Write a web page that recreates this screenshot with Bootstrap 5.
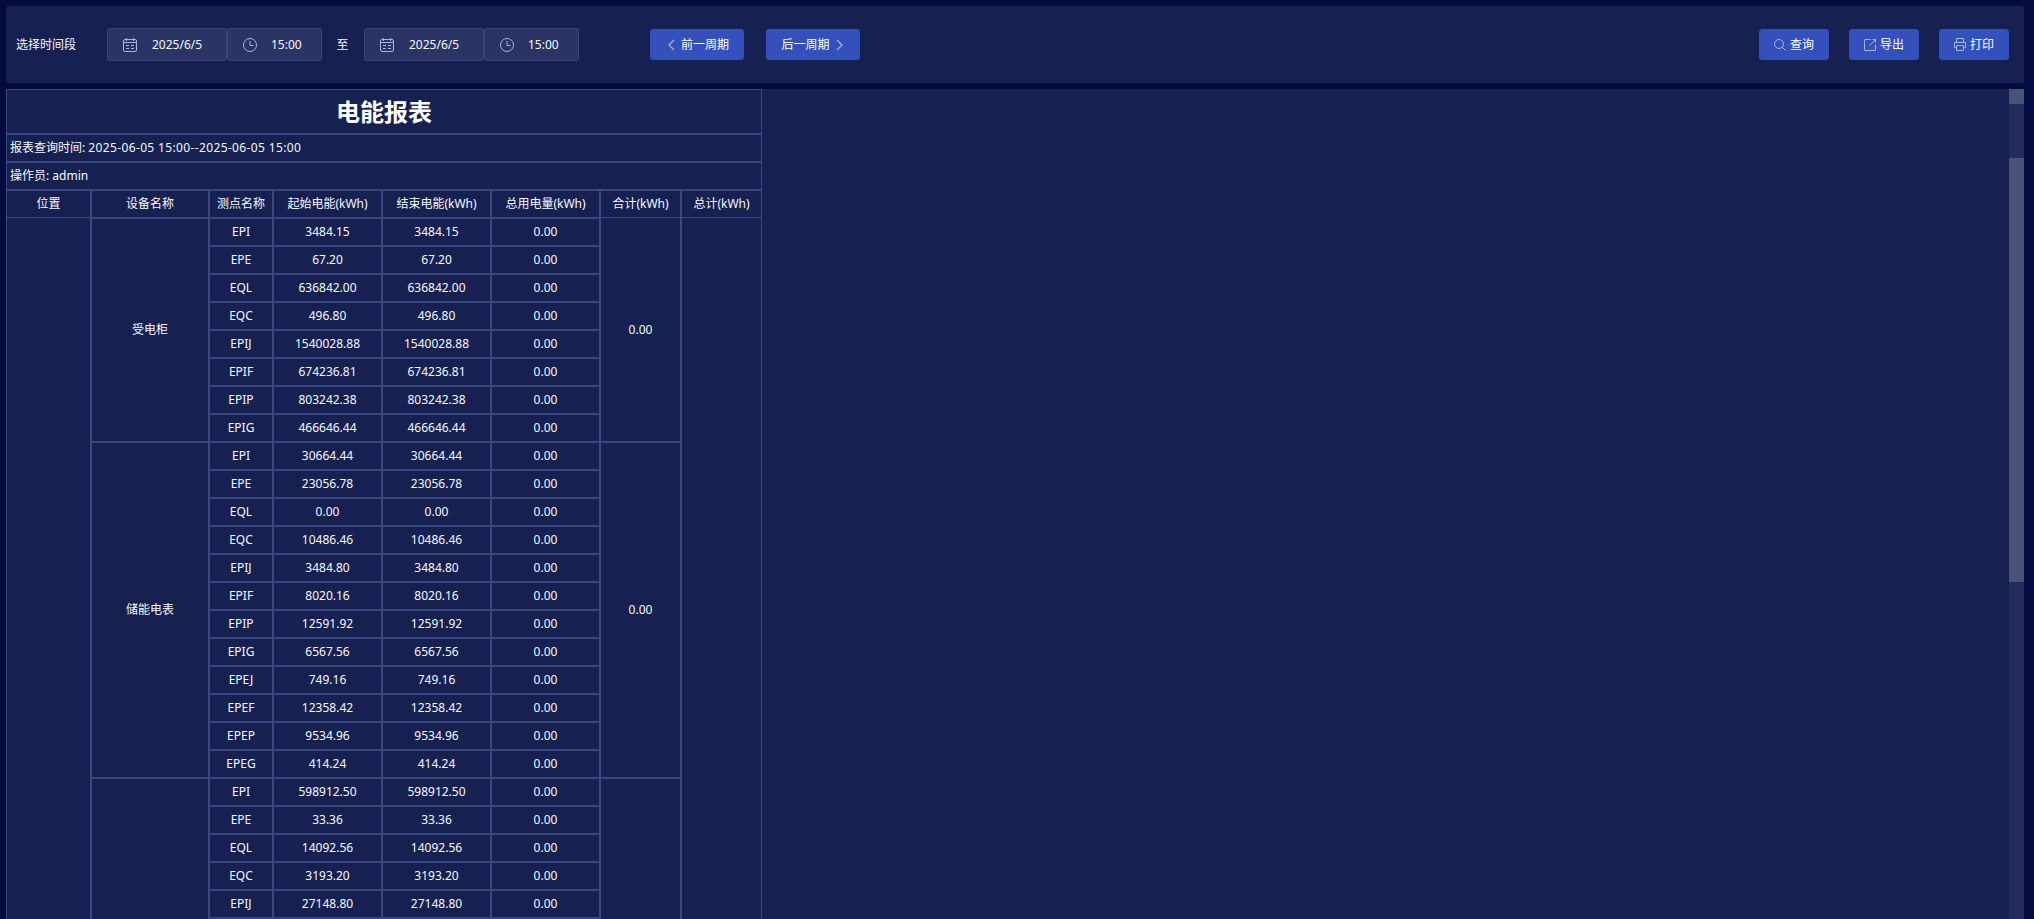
<!DOCTYPE html>
<html lang="zh-CN">
<head>
<meta charset="utf-8">
<title>电能报表</title>
<link href="https://cdn.jsdelivr.net/npm/bootstrap@5.3.0/dist/css/bootstrap.min.css" rel="stylesheet">
<style>
html,body{height:100%;overflow:hidden;}
body{background:#040b3f;color:#fff;font-family:"Noto Sans","Noto Sans CJK SC",sans-serif;font-size:12px;padding:6px 10px 0 6px;}
.shell{height:100%;gap:6px;}
.topbar{height:77px;background:#162152;border-radius:2px;padding:0 15px 0 10px;flex:none;}
.range-label{width:91px;color:#f6f8fd;}
.picker{height:33px;background:#2a3566;border:1px solid #3a4580;border-radius:3px;color:#f6f8fd;}
.picker-date{width:120px;padding-left:15px;gap:15px;}
.picker-time{width:95px;padding-left:15px;gap:14px;}
.range-to{width:42px;padding-right:1px;text-align:center;color:#f6f8fd;}
.picker svg,.act-btn svg{flex:none;stroke:#a9b4e2;fill:none;stroke-width:1;}
.act-btn{--bs-btn-bg:#3450bd;--bs-btn-border-color:#3450bd;--bs-btn-hover-bg:#3450bd;--bs-btn-hover-border-color:#3450bd;--bs-btn-color:#fff;--bs-btn-hover-color:#fff;--bs-btn-font-size:12px;--bs-btn-padding-x:0;--bs-btn-padding-y:0;--bs-btn-border-radius:3px;height:31px;font-family:inherit;gap:4px;}
.act-week{width:94px;gap:6px;}
.act-week.first{margin-left:71px;padding-left:3px;}
.act-week.second{margin-left:22px;padding-right:2px;}
.act-tool{width:70px;margin-left:20px;}
.act-tool.first{margin-left:auto;}
.main-panel{background:#162152;min-height:0;flex:1 1 0;}
.report-area{overflow:hidden;min-width:0;}
.rpt-table{width:756px;table-layout:fixed;border-collapse:separate;border-spacing:0;--bs-table-bg:transparent;--bs-table-color:#f6f8fd;}
.rpt-table>tbody>tr>td{padding:0;height:28px;border:1px solid #3b4782;text-align:center;vertical-align:middle;font-size:12px;line-height:16px;color:#f6f8fd;background:transparent;}
.rpt-table>tbody>tr>td.title-cell{height:45px;font-size:24px;font-weight:700;line-height:30px;color:#fff;}
.rpt-table>tbody>tr>td.info-cell{text-align:left;padding-left:3px;}
.rpt-table>tbody>tr>td.no-top{border-top-width:0;}
.stamp-text{letter-spacing:.36px;}
.fake-scroll{width:15px;flex:none;background:#222c5d;}
.scroll-cap{height:15px;background:#4a5278;}
.scroll-thumb{height:424px;margin-top:54px;background:#4a5278;}
</style>
</head>
<body>
<div class="shell d-flex flex-column">
  <div class="topbar d-flex align-items-center">
    <span class="range-label">选择时间段</span>
    <div class="picker picker-date d-flex align-items-center">
      <svg width="14" height="14" viewBox="0 0 14 14"><rect x="0.5" y="1.5" width="13" height="12" rx="1.5"/><path d="M0.5 4.5h13M3.5 0v3M10.5 0v3M3 7.500h3M8 7.500h3M3 10.500h3M8 10.500h3"/></svg>
      <span>2025/6/5</span>
    </div>
    <div class="picker picker-time d-flex align-items-center">
      <svg width="14" height="14" viewBox="0 0 14 14"><circle cx="7" cy="7" r="6.5"/><path d="M7 3v4.500h3.500"/></svg>
      <span>15:00</span>
    </div>
    <span class="range-to">至</span>
    <div class="picker picker-date d-flex align-items-center">
      <svg width="14" height="14" viewBox="0 0 14 14"><rect x="0.5" y="1.5" width="13" height="12" rx="1.5"/><path d="M0.5 4.5h13M3.5 0v3M10.5 0v3M3 7.500h3M8 7.500h3M3 10.500h3M8 10.500h3"/></svg>
      <span>2025/6/5</span>
    </div>
    <div class="picker picker-time d-flex align-items-center">
      <svg width="14" height="14" viewBox="0 0 14 14"><circle cx="7" cy="7" r="6.5"/><path d="M7 3v4.500h3.500"/></svg>
      <span>15:00</span>
    </div>
    <button type="button" class="btn act-btn act-week first d-inline-flex align-items-center justify-content-center">
      <svg width="7" height="12" viewBox="0 0 7 12"><path d="M6 1 1 6l5 5" stroke-width="1.2"/></svg><span>前一周期</span>
    </button>
    <button type="button" class="btn act-btn act-week second d-inline-flex align-items-center justify-content-center">
      <span>后一周期</span><svg width="7" height="12" viewBox="0 0 7 12"><path d="M1 1l5 5-5 5" stroke-width="1.2"/></svg>
    </button>
    <button type="button" class="btn act-btn act-tool first d-inline-flex align-items-center justify-content-center">
      <svg width="12" height="12" viewBox="0 0 12 12"><circle cx="5" cy="5" r="4.500"/><path d="M8.300 8.300 11.700 11.700"/></svg><span>查询</span>
    </button>
    <button type="button" class="btn act-btn act-tool d-inline-flex align-items-center justify-content-center">
      <svg width="12" height="12" viewBox="0 0 12 12"><path d="M6.500.5H1a.5.5 0 0 0-.5.5v10a.5.5 0 0 0 .5.5h10a.5.5 0 0 0 .5-.5V5.500M5.500 6.500l6-6M8.500.5h3v3"/></svg><span>导出</span>
    </button>
    <button type="button" class="btn act-btn act-tool d-inline-flex align-items-center justify-content-center">
      <svg width="12" height="13" viewBox="0 0 12 13"><path d="M2.500 4V.5h7V4M2.500 9.500H.5v-5h11v5h-2M2.500 7.500h7v5h-7z"/></svg><span>打印</span>
    </button>
  </div>
  <div class="main-panel d-flex">
    <div class="report-area flex-grow-1">
      <table class="table mb-0 rpt-table">
        <colgroup><col style="width:85px"><col style="width:118px"><col style="width:64px"><col style="width:109px"><col style="width:109px"><col style="width:109px"><col style="width:81px"><col style="width:81px"></colgroup>
        <tbody>
          <tr><td colspan="8" class="title-cell">电能报表</td></tr>
          <tr><td colspan="8" class="info-cell">报表查询时间: <span class="stamp-text">2025-06-05 15:00--2025-06-05 15:00</span></td></tr>
          <tr><td colspan="8" class="info-cell">操作员: admin</td></tr>
          <tr><td>位置</td><td>设备名称</td><td>测点名称</td><td>起始电能(kWh)</td><td>结束电能(kWh)</td><td>总用电量(kWh)</td><td>合计(kWh)</td><td>总计(kWh)</td></tr>
          <tr><td rowspan="26" class="no-top"></td><td rowspan="8">受电柜</td><td>EPI</td><td>3484.15</td><td>3484.15</td><td>0.00</td><td rowspan="8" class="no-top">0.00</td><td rowspan="26" class="no-top"></td></tr>
          <tr><td>EPE</td><td>67.20</td><td>67.20</td><td>0.00</td></tr>
          <tr><td>EQL</td><td>636842.00</td><td>636842.00</td><td>0.00</td></tr>
          <tr><td>EQC</td><td>496.80</td><td>496.80</td><td>0.00</td></tr>
          <tr><td>EPIJ</td><td>1540028.88</td><td>1540028.88</td><td>0.00</td></tr>
          <tr><td>EPIF</td><td>674236.81</td><td>674236.81</td><td>0.00</td></tr>
          <tr><td>EPIP</td><td>803242.38</td><td>803242.38</td><td>0.00</td></tr>
          <tr><td>EPIG</td><td>466646.44</td><td>466646.44</td><td>0.00</td></tr>
          <tr><td rowspan="12">储能电表</td><td>EPI</td><td>30664.44</td><td>30664.44</td><td>0.00</td><td rowspan="12">0.00</td></tr>
          <tr><td>EPE</td><td>23056.78</td><td>23056.78</td><td>0.00</td></tr>
          <tr><td>EQL</td><td>0.00</td><td>0.00</td><td>0.00</td></tr>
          <tr><td>EQC</td><td>10486.46</td><td>10486.46</td><td>0.00</td></tr>
          <tr><td>EPIJ</td><td>3484.80</td><td>3484.80</td><td>0.00</td></tr>
          <tr><td>EPIF</td><td>8020.16</td><td>8020.16</td><td>0.00</td></tr>
          <tr><td>EPIP</td><td>12591.92</td><td>12591.92</td><td>0.00</td></tr>
          <tr><td>EPIG</td><td>6567.56</td><td>6567.56</td><td>0.00</td></tr>
          <tr><td>EPEJ</td><td>749.16</td><td>749.16</td><td>0.00</td></tr>
          <tr><td>EPEF</td><td>12358.42</td><td>12358.42</td><td>0.00</td></tr>
          <tr><td>EPEP</td><td>9534.96</td><td>9534.96</td><td>0.00</td></tr>
          <tr><td>EPEG</td><td>414.24</td><td>414.24</td><td>0.00</td></tr>
          <tr><td rowspan="6"></td><td>EPI</td><td>598912.50</td><td>598912.50</td><td>0.00</td><td rowspan="6"></td></tr>
          <tr><td>EPE</td><td>33.36</td><td>33.36</td><td>0.00</td></tr>
          <tr><td>EQL</td><td>14092.56</td><td>14092.56</td><td>0.00</td></tr>
          <tr><td>EQC</td><td>3193.20</td><td>3193.20</td><td>0.00</td></tr>
          <tr><td>EPIJ</td><td>27148.80</td><td>27148.80</td><td>0.00</td></tr>
          <tr><td></td><td></td><td></td><td></td></tr>
        </tbody>
      </table>
    </div>
    <div class="fake-scroll">
      <div class="scroll-cap"></div>
      <div class="scroll-thumb"></div>
    </div>
  </div>
</div>
<script src="https://cdn.jsdelivr.net/npm/bootstrap@5.3.0/dist/js/bootstrap.bundle.min.js"></script>
</body>
</html>
